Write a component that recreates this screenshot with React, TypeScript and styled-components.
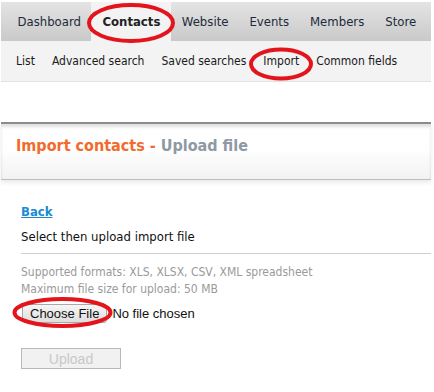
import styled, { createGlobalStyle } from "styled-components";

const GlobalStyle = createGlobalStyle`
  html, body {
    margin: 0;
    padding: 0;
    background: #ffffff;
  }
  body {
    font-family: "DejaVu Sans Condensed", "DejaVu Sans", Verdana, sans-serif;
    color: #1a1a1a;
  }
`;

const Page = styled.div`
  position: relative;
  width: 434px;
  height: 392px;
  overflow: hidden;
`;

const TopNav = styled.nav`
  display: flex;
  height: 39px;
  margin: 2px 3px 0 1px;
  padding-left: 6px;
  background: linear-gradient(#e4e4e4, #c9c9c9);
`;

const Tab = styled.a<{ $active?: boolean }>`
  display: flex;
  align-items: center;
  padding: 0 ${(p) => (p.$active ? "11px" : "10.5px")};
  font-size: 13px;
  font-weight: ${(p) => (p.$active ? 700 : 400)};
  color: ${(p) => (p.$active ? "#222" : "#1c2a3a")};
  background: ${(p) => (p.$active ? "#f3f3f3" : "transparent")};
  text-decoration: none;
`;

const SubNav = styled.nav`
  display: flex;
  align-items: center;
  gap: 17px;
  height: 40px;
  margin: 0 3px 0 1px;
  padding-left: 15px;
  background: #f3f3f3;
  border-bottom: 1px solid #e3e3e3;
`;

const SubLink = styled.a`
  font-size: 12px;
  color: #1a1a1a;
  text-decoration: none;
`;

const PageHeader = styled.header`
  display: flex;
  align-items: center;
  height: 58px;
  margin: 40px 3px 0 1px;
  padding: 0 0 13px 15px;
  box-sizing: border-box;
  border-top: 2px solid #8c8c8c;
  border-bottom: 1px solid #bdbdbd;
  background: linear-gradient(#ffffff 45%, #f2f2f2);
  box-shadow: 0 3px 4px rgba(0, 0, 0, 0.08), inset 0 3px 3px rgba(0, 0, 0, 0.12);
`;

const Title = styled.h1`
  margin: 0;
  font-size: 16px;
  font-weight: 700;
  color: #f26a2c;
`;

const TitleSub = styled.span`
  color: #8e99a4;
`;

const Content = styled.main`
  padding: 21px 3px 0 21px;
`;

const BackLink = styled.a`
  display: inline-block;
  font-size: 13px;
  font-weight: 700;
  color: #1b8bd2;
  text-decoration: underline;
`;

const Lead = styled.p`
  margin: 9px 0 0;
  padding-bottom: 9px;
  font-size: 13px;
  color: #111;
  border-bottom: 1px solid #cfcfcf;
`;

const Hints = styled.div`
  margin-top: 10px;
`;

const Hint = styled.p`
  margin: 0;
  font-size: 12px;
  line-height: 17px;
  color: #9a9a9a;
`;

const FileRow = styled.div`
  display: flex;
  align-items: center;
  gap: 5px;
  margin-top: 6px;
  font-family: "Liberation Sans", Arial, sans-serif;
  font-size: 13px;
  color: #111;
`;

const ChooseButton = styled.button`
  height: 19px;
  margin-left: 1px;
  padding: 0 7px;
  font-family: "Liberation Sans", Arial, sans-serif;
  font-size: 13px;
  color: #111;
  background: linear-gradient(#f6f6f6, #dedede);
  border: 1px solid #a9a9a9;
  border-radius: 3px;
`;

const UploadButton = styled.button`
  display: block;
  width: 100px;
  height: 21px;
  margin-top: 25px;
  font-family: "Liberation Sans", Arial, sans-serif;
  font-size: 14px;
  color: #c8c8c8;
  background: #f1f1f1;
  border: 1px solid #b8b8b8;
`;

const Marks = styled.svg`
  position: absolute;
  inset: 0;
  pointer-events: none;
`;

const tabs = ["Dashboard", "Contacts", "Website", "Events", "Members", "Store"];
const subLinks = ["List", "Advanced search", "Saved searches", "Import", "Common fields"];

export default function App() {
  return (
    <Page>
      <GlobalStyle />
      <TopNav>
        {tabs.map((t) => (
          <Tab key={t} $active={t === "Contacts"}>
            {t}
          </Tab>
        ))}
      </TopNav>
      <SubNav>
        {subLinks.map((l) => (
          <SubLink key={l}>{l}</SubLink>
        ))}
      </SubNav>
      <PageHeader>
        <Title>
          Import contacts - <TitleSub>Upload file</TitleSub>
        </Title>
      </PageHeader>
      <Content>
        <BackLink>Back</BackLink>
        <Lead>Select then upload import file</Lead>
        <Hints>
          <Hint>Supported formats: XLS, XLSX, CSV, XML spreadsheet</Hint>
          <Hint>Maximum file size for upload: 50 MB</Hint>
        </Hints>
        <FileRow>
          <ChooseButton>Choose File</ChooseButton>
          No file chosen
        </FileRow>
        <UploadButton disabled>Upload</UploadButton>
      </Content>
      <Marks width="434" height="392" viewBox="0 0 434 392">
        <g fill="none" stroke="#e3141c" strokeWidth="4">
          <ellipse cx="131" cy="23" rx="42" ry="18" />
          <ellipse cx="281" cy="64" rx="30" ry="14.5" />
          <ellipse cx="62.5" cy="312.5" rx="48" ry="13.5" />
        </g>
      </Marks>
    </Page>
  );
}
